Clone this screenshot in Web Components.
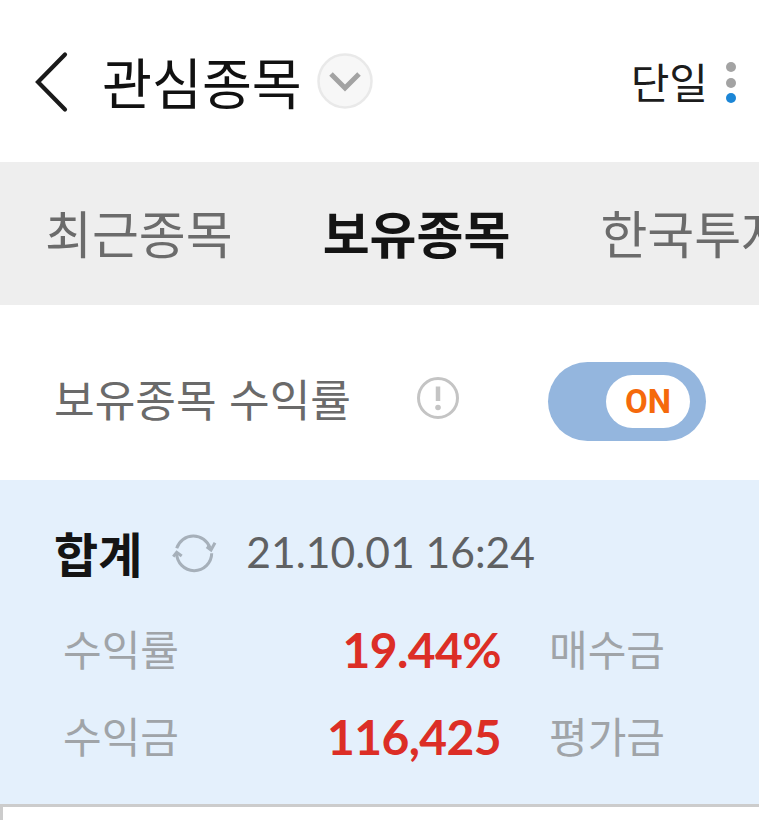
<!DOCTYPE html>
<html lang="ko"><head><meta charset="utf-8">
<style>
html,body{margin:0;padding:0;background:#fff}
body{width:759px;height:820px;overflow:hidden;font-family:"Noto Sans CJK KR","Noto Sans",sans-serif}
</style></head><body>
<app-header title-text="관심종목" mode="단일"></app-header>
<tab-strip>
  <tab-item>최근종목</tab-item>
  <tab-item active>보유종목</tab-item>
  <tab-item>한국투자</tab-item>
</tab-strip>
<toggle-row label="보유종목 수익률"></toggle-row>
<summary-panel stamp="21.10.01 16:24">
  <metric-row label="수익률" value="19.44%" other="매수금"></metric-row>
  <metric-row label="수익금" value="116,425" other="평가금"></metric-row>
</summary-panel>
<list-edge></list-edge>
<script>
function def(name,html){
  customElements.define(name,class extends HTMLElement{
    connectedCallback(){
      if(this.shadowRoot)return;
      const s=this.attachShadow({mode:'open'});
      s.innerHTML=html(this);
    }
  });
}
const kr='"Noto Sans CJK KR","Noto Sans",sans-serif';
def('app-header',e=>`<style>
:host{display:flex;align-items:center;height:162px;box-sizing:border-box;padding:0 0 0 33px;background:#fff}
.back{width:36px;height:62px;flex:none;margin-top:1px}
h1{margin:0 0 0 33px;font:400 54.300px/1 ${kr};color:#111;white-space:nowrap}
.more{width:56px;height:56px;flex:none;margin-left:15px;margin-bottom:1px}
.mode{margin-left:auto;font:400 42px/1 ${kr};color:#1c1c1c;white-space:nowrap}
.dots{display:flex;flex-direction:column;gap:5.500px;margin:3px 23px 0 18px}
.dots i{width:10px;height:10px;border-radius:50%;background:#a3a3a3;display:block}
.dots i:last-child{background:#1c86d6}
</style>
<svg class="back" viewBox="0 0 36 62"><path d="M32 3.500 L5 31 L32 58.500" fill="none" stroke="#1a1a1a" stroke-width="4.200" stroke-linecap="round"/></svg>
<h1>${e.getAttribute('title-text')}</h1>
<svg class="more" viewBox="0 0 56 56"><circle cx="28" cy="28" r="26.500" fill="#f7f7f7" stroke="#e9e9e9" stroke-width="2.500"/><path d="M14 21 L28 35 L42 21" fill="none" stroke="#a3a3a3" stroke-width="5"/></svg>
<span class="mode">${e.getAttribute('mode')}</span>
<div class="dots"><i></i><i></i><i></i></div>`);
def('tab-strip',e=>`<style>
:host{display:flex;align-items:center;gap:90px;height:143px;padding-left:45px;background:#eeeeee;overflow:hidden;white-space:nowrap}
</style><slot></slot>`);
def('tab-item',e=>`<style>
:host{display:block;flex:none;font:400 51px/1 ${kr};color:#6b6b6b;margin-bottom:2px}
:host([active]){font-weight:700;color:#141414}
</style><slot></slot>`);
def('toggle-row',e=>`<style>
:host{display:flex;align-items:center;height:175px;box-sizing:border-box;padding:17px 0 0 54px;background:#fff}
.t{font:400 44.200px/1 ${kr};color:#6a6a6a;white-space:nowrap;margin-bottom:6px}
svg{width:42px;height:42px;flex:none;margin:0 0 6px 66px}
.sw{margin-left:89px;width:158px;height:79px;border-radius:40px;background:#94b6de;display:flex;align-items:center;justify-content:flex-end;padding-right:16px;box-sizing:border-box;flex:none}
.k{width:84px;height:53px;border-radius:27px;background:#fff;display:flex;align-items:center;justify-content:center;font:700 33px/1 Roboto,sans-serif;color:#f5690c}
</style>
<span class="t">${e.getAttribute('label')}</span>
<svg viewBox="0 0 42 42"><circle cx="21" cy="21" r="19.500" fill="none" stroke="#c4c4c4" stroke-width="3"/><path d="M21 9.500V24" stroke="#c4c4c4" stroke-width="4.500" fill="none"/><circle cx="21" cy="30.500" r="2.800" fill="#c4c4c4"/></svg>
<div class="sw"><div class="k">ON</div></div>`);
def('summary-panel',e=>`<style>
:host{display:block;height:324px;box-sizing:border-box;background:#e4f0fc;padding:42px 0 0 54px}
.h{display:flex;align-items:center;height:60px}
b{font:700 48px/1 ${kr};color:#141414;white-space:nowrap}
svg{width:42px;height:42px;margin:0 0 2px 31px;flex:none;overflow:visible}
.s{margin-left:31px;font:400 42.600px/1 Lato,sans-serif;color:#5f6163;white-space:nowrap}
.m{display:flex;flex-direction:column;margin-top:24px;padding-left:9px}
</style>
<div class="h"><b>합계</b>
<svg viewBox="0 0 42 42" fill="none" stroke="#a6b0ba" stroke-width="3"><path d="M3.700 18.300A17.500 17.500 0 0 1 37 18"/><path d="M33.700 16.700L38 20L42 12.700"/><path d="M38.700 23.300A17.500 17.500 0 0 1 3.700 23"/><path d="M.3 26.700L3.700 22.300L8.700 26"/></svg>
<span class="s">${e.getAttribute('stamp')}</span></div>
<div class="m"><slot></slot></div>`);
def('metric-row',e=>`<style>
:host{display:flex;align-items:center;height:87px;white-space:nowrap}
.w{width:438px;display:flex;align-items:center;flex:none}
.l{width:150px;font:400 42px/1 ${kr};color:#a0a4a8;flex:none;margin-top:-3px}
.v{flex:1;text-align:right;font:700 48px/1 Lato,sans-serif;letter-spacing:-.6px;color:#dc2e26}
.o{margin-left:48px;font:400 42px/1 ${kr};color:#a0a4a8;margin-top:-3px}
</style><div class="w"><span class="l">${e.getAttribute('label')}</span><span class="v">${e.getAttribute('value')}</span></div><span class="o">${e.getAttribute('other')}</span>`);
def('list-edge',e=>`<style>
:host{display:block;height:16px;box-sizing:border-box;border-top:3px solid #cccccc;border-left:3px solid #cccccc;background:#fff}
</style>`);
</script>
</body></html>
